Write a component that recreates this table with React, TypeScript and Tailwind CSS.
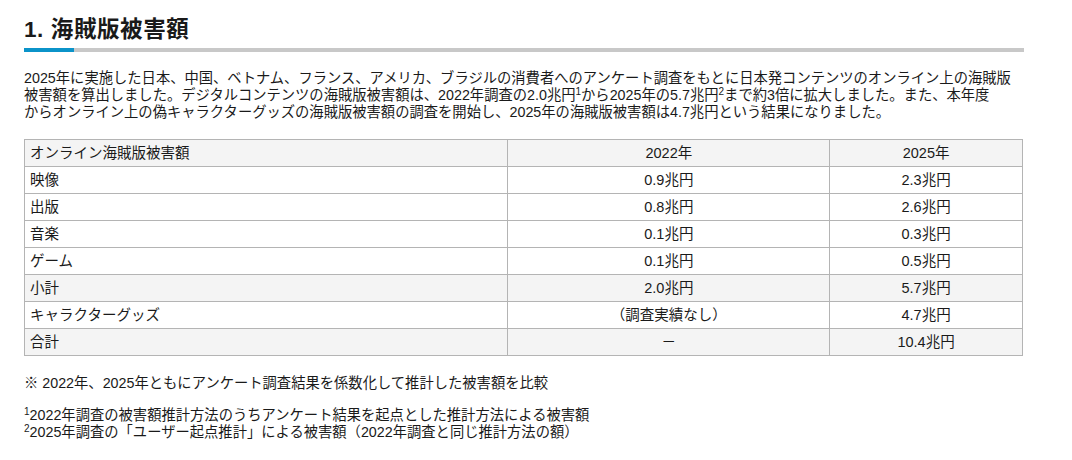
import React from "react";

const rows: { label: string; a: string; b: string; gray?: boolean }[] = [
  { label: "映像", a: "0.9兆円", b: "2.3兆円" },
  { label: "出版", a: "0.8兆円", b: "2.6兆円" },
  { label: "音楽", a: "0.1兆円", b: "0.3兆円" },
  { label: "ゲーム", a: "0.1兆円", b: "0.5兆円" },
  { label: "小計", a: "2.0兆円", b: "5.7兆円", gray: true },
  { label: "キャラクターグッズ", a: "（調査実績なし）", b: "4.7兆円" },
  { label: "合計", a: "－", b: "10.4兆円", gray: true },
];

function Sup({ n }: { n: string }) {
  return <sup className="text-[10px]">{n}</sup>;
}

export default function App() {
  return (
    <div
      className="w-[1072px] h-[460px] bg-white text-[#1a1a1a]"
      style={{ fontFamily: '"Liberation Sans", "Noto Sans CJK JP", sans-serif' }}
    >
      <div className="ml-[24px] w-[1000px] pt-[16px]">
        <h1 className="text-[22.5px] leading-[27px] font-bold text-[#1a1a1a] tracking-[0.6px]">
          1. 海賊版被害額
        </h1>
        <div className="mt-[5px] flex h-[4px]">
          <div className="w-[50px] bg-[#0b93c9]" />
          <div className="flex-1 bg-[#c8c8c8]" />
        </div>
        <p className="mt-[18px] text-[14.3px] leading-[17px] whitespace-nowrap">
          2025年に実施した日本、中国、ベトナム、フランス、アメリカ、ブラジルの消費者へのアンケート調査をもとに日本発コンテンツのオンライン上の海賊版
          <br />
          被害額を算出しました。デジタルコンテンツの海賊版被害額は、2022年調査の2.0兆円<Sup n="1" />から2025年の5.7兆円<Sup n="2" />まで約3倍に拡大しました。また、本年度
          <br />
          からオンライン上の偽キャラクターグッズの海賊版被害額の調査を開始し、2025年の海賊版被害額は4.7兆円という結果になりました。
        </p>
        <table className="mt-[18px] w-[999px] border-collapse text-[14.5px]">
          <colgroup>
            <col className="w-[484px]" />
            <col className="w-[322px]" />
            <col className="w-[193px]" />
          </colgroup>
          <tbody>
            <tr className="bg-[#f4f4f4]">
              <td className="h-[27px] border border-[#b4b4b4] pl-[5px] leading-[16px]">オンライン海賊版被害額</td>
              <td className="h-[27px] border border-[#b4b4b4] text-center leading-[16px]">2022年</td>
              <td className="h-[27px] border border-[#b4b4b4] text-center leading-[16px]">2025年</td>
            </tr>
            {rows.map((r) => (
              <tr key={r.label} className={r.gray ? "bg-[#f4f4f4]" : "bg-white"}>
                <td className="h-[27px] border border-[#b4b4b4] pl-[5px] leading-[16px]">{r.label}</td>
                <td className="h-[27px] border border-[#b4b4b4] text-center leading-[16px]">{r.a}</td>
                <td className="h-[27px] border border-[#b4b4b4] text-center leading-[16px]">{r.b}</td>
              </tr>
            ))}
          </tbody>
        </table>
        <p className="mt-[19px] text-[14.3px] leading-[17px]">※ 2022年、2025年ともにアンケート調査結果を係数化して推計した被害額を比較</p>
        <p className="mt-[15px] text-[14.3px] leading-[17px]">
          <Sup n="1" />2022年調査の被害額推計方法のうちアンケート結果を起点とした推計方法による被害額
          <br />
          <Sup n="2" />2025年調査の「ユーザー起点推計」による被害額（2022年調査と同じ推計方法の額）
        </p>
      </div>
    </div>
  );
}
